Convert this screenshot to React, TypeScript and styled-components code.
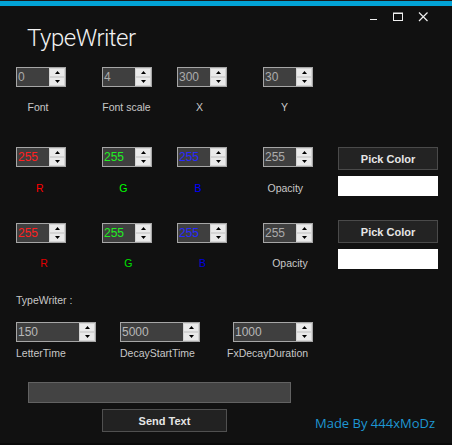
import React from "react";
import styled, { createGlobalStyle } from "styled-components";

const Global = createGlobalStyle`
  html, body { margin: 0; padding: 0; background: #1c1c1c; }
  body { width: 452px; height: 445px; overflow: hidden; }
`;

const Window = styled.div`
  box-sizing: border-box;
  margin-top: 1px;
  width: 452px;
  height: 442px;
  background: #111111;
  border-top: 5px solid #02a3d6;
  display: flex;
  flex-direction: column;
  padding-left: 16px;
`;

const BottomEdge = styled.div`
  height: 2px;
  background: #0a0a0a;
`;

const Header = styled.div`
  display: flex;
  align-items: flex-start;
  height: 61px;
`;

const Title = styled.h1`
  margin: 18px 0 0 11px;
  font: 300 24px/28px Roboto, "Open Sans", sans-serif;
  letter-spacing: -0.5px;
  color: #f2f2f2;
`;

const Controls = styled.div`
  margin-left: auto;
  padding: 6px 24px 0 0;
  display: flex;
  gap: 15px;
`;

const ControlIcon = styled.svg`
  width: 10px;
  height: 10px;
  display: block;
  stroke: #f0f0f0;
  fill: none;
`;

const ParamGrid = styled.div<{ $mt: number; $cols?: string }>`
  display: grid;
  grid-template-columns: ${(p) => p.$cols ?? "86px 75px 86px 75px 100px"};
  margin-top: ${(p) => p.$mt}px;
`;

const Spin = styled.div<{ $w: number; $align?: string }>`
  box-sizing: border-box;
  display: flex;
  width: ${(p) => p.$w}px;
  height: 20px;
  border: 1px solid #a6a6a6;
  background: #3f3f3f;
  align-self: ${(p) => p.$align ?? "start"};
`;

const SpinValue = styled.span<{ $color: string }>`
  flex: 1;
  padding-left: 1px;
  font: 12px/18px "Liberation Sans", Arial, sans-serif;
  color: ${(p) => p.$color};
`;

const SpinButtons = styled.div`
  width: 16px;
  display: flex;
  flex-direction: column;
  background: #f0f0f0;
`;

const SpinArrow = styled.div`
  flex: 1;
  display: flex;
  align-items: center;
  justify-content: center;
  box-sizing: border-box;
  border: 1px solid #d4d4d4;
  background: #eaeaea;
`;

const Label = styled.div<{ $dx?: number; $mt: number; $color?: string; $w?: number; $align?: string }>`
  width: ${(p) => p.$w ?? 50}px;
  margin-top: ${(p) => p.$mt}px;
  margin-left: ${(p) => p.$dx ?? 0}px;
  text-align: ${(p) => p.$align ?? "center"};
  white-space: nowrap;
  font: 10.5px/13px "Liberation Sans", Arial, sans-serif;
  color: ${(p) => p.$color ?? "#c8c8c8"};
`;

const PickButton = styled.button<{ $align?: string }>`
  box-sizing: border-box;
  width: 100px;
  height: 23px;
  padding: 0;
  background: #232323;
  border: 1px solid #4a4a4a;
  color: #e6e6e6;
  font: bold 11px "Liberation Sans", Arial, sans-serif;
  align-self: ${(p) => p.$align ?? "start"};
`;

const Swatch = styled.div`
  width: 100px;
  height: 20px;
  margin-top: 6px;
  background: #ffffff;
  align-self: start;
`;

const SectionTitle = styled.div`
  margin-top: 24px;
  font: 10.5px/13px "Liberation Sans", Arial, sans-serif;
  color: #c8c8c8;
`;

const TextInput = styled.div`
  box-sizing: border-box;
  width: 263px;
  height: 21px;
  margin: 22.5px 0 0 12px;
  background: #434343;
  border: 1px solid #626262;
`;

const BottomRow = styled.div`
  display: flex;
  align-items: flex-start;
  margin-top: 6px;
`;

const SendButton = styled.button`
  box-sizing: border-box;
  width: 125px;
  height: 23px;
  margin-left: 86px;
  padding: 0;
  background: #222222;
  border: 1px solid #505050;
  color: #e6e6e6;
  font: bold 11px "Liberation Sans", Arial, sans-serif;
`;

const Credit = styled.span`
  margin: 5px 0 0 88px;
  font: 13px/18px "Open Sans", sans-serif;
  color: #1e96d2;
`;

function Arrow({ up }: { up: boolean }) {
  return (
    <svg width="5" height="3" viewBox="0 0 5 3">
      <polygon points={up ? "2.5,0 5,3 0,3" : "0,0 5,0 2.5,3"} fill="#000" />
    </svg>
  );
}

function NumBox({
  value,
  color = "#ababab",
  width = 50,
  align,
}: {
  value: string;
  color?: string;
  width?: number;
  align?: string;
}) {
  return (
    <Spin $w={width} $align={align}>
      <SpinValue $color={color}>{value}</SpinValue>
      <SpinButtons>
        <SpinArrow>
          <Arrow up />
        </SpinArrow>
        <SpinArrow>
          <Arrow up={false} />
        </SpinArrow>
      </SpinButtons>
    </Spin>
  );
}

export default function App() {
  return (
    <>
      <Global />
      <Window>
        <Header>
          <Title>TypeWriter</Title>
          <Controls>
            <ControlIcon viewBox="0 0 10 10">
              <line x1="2" y1="7.5" x2="9" y2="7.5" strokeWidth="1" />
            </ControlIcon>
            <ControlIcon viewBox="0 0 10 10">
              <rect x="0.5" y="1" width="9" height="7.5" strokeWidth="1" />
              <line x1="0" y1="1.5" x2="10" y2="1.5" strokeWidth="1" />
            </ControlIcon>
            <ControlIcon viewBox="0 0 10 10">
              <path d="M1 0.5 L9.5 9 M9.5 0.5 L1 9" strokeWidth="1.2" />
            </ControlIcon>
          </Controls>
        </Header>

        <ParamGrid $mt={0}>
          <NumBox value="0" />
          <NumBox value="4" />
          <NumBox value="300" />
          <NumBox value="30" />
          <div />
          <Label $mt={14} $dx={-3}>Font</Label>
          <Label $mt={14} $dx={-0.5}>Font scale</Label>
          <Label $mt={14} $dx={-2.5}>X</Label>
          <Label $mt={14} $dx={-3.5}>Y</Label>
        </ParamGrid>

        <ParamGrid $mt={33}>
          <NumBox value="255" color="#ff2020" />
          <NumBox value="255" color="#22f022" />
          <NumBox value="255" color="#2828ff" />
          <NumBox value="255" />
          <PickButton>Pick Color</PickButton>
          <Label $mt={11.5} $dx={-1.3} $color="#ff0000">R</Label>
          <Label $mt={11.5} $dx={-3.7} $color="#00ff00">G</Label>
          <Label $mt={11.5} $dx={-4} $color="#0000ff">B</Label>
          <Label $mt={11.5} $dx={-2.7}>Opacity</Label>
          <Swatch />
        </ParamGrid>

        <ParamGrid $mt={24}>
          <NumBox value="255" color="#ff2020" align="end" />
          <NumBox value="255" color="#22f022" align="end" />
          <NumBox value="255" color="#2828ff" align="end" />
          <NumBox value="255" align="end" />
          <PickButton>Pick Color</PickButton>
          <Label $mt={13.5} $dx={3} $color="#e00000">R</Label>
          <Label $mt={13.5} $dx={1.3} $color="#00e000">G</Label>
          <Label $mt={13.5} $dx={0.5} $color="#0000dd">B</Label>
          <Label $mt={13.5} $dx={2}>Opacity</Label>
          <Swatch />
        </ParamGrid>

        <SectionTitle>TypeWriter :</SectionTitle>

        <ParamGrid $mt={15.5} $cols="104px 113px 120px">
          <NumBox value="150" width={80} color="#b8b8b8" />
          <NumBox value="5000" width={80} color="#b8b8b8" />
          <NumBox value="1000" width={80} color="#b8b8b8" />
          <Label $mt={4.5} $w={90} $align="left">LetterTime</Label>
          <Label $mt={4.5} $w={90} $align="left">DecayStartTime</Label>
          <Label $mt={4.5} $w={100} $dx={-6} $align="left">FxDecayDuration</Label>
        </ParamGrid>

        <TextInput />

        <BottomRow>
          <SendButton>Send Text</SendButton>
          <Credit>Made By 444xMoDz</Credit>
        </BottomRow>
      </Window>
      <BottomEdge />
    </>
  );
}
